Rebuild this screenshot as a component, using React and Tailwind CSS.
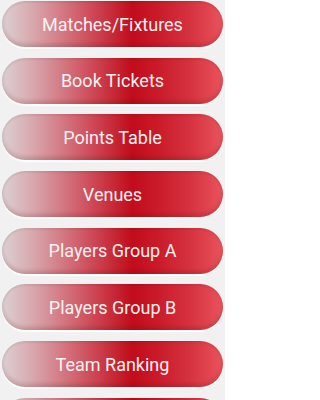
import React from 'react';

const items = [
  'Matches/Fixtures',
  'Book Tickets',
  'Points Table',
  'Venues',
  'Players Group A',
  'Players Group B',
  'Team Ranking',
  '',
];

export default function App() {
  return (
    <div className="w-[225px] h-[400px] overflow-hidden bg-[#f1f1f1]">
      <div className="flex flex-col gap-[10.7px] pt-px px-[2px]">
        {items.map((label, i) => (
          <button
            key={i}
            className="h-[46px] w-full shrink-0 rounded-full flex items-center justify-center text-[#fdf2f2] text-[18px] font-['Roboto',sans-serif] bg-[linear-gradient(90deg,#dcd0d2_0%,#d8aeb3_12%,#d47d87_26%,#cd4553_42%,#c10c1b_59%,#ca1a2a_70%,#d5323f_85%,#ea545c_100%)] shadow-[inset_0_-3px_4px_rgba(90,0,0,0.18),inset_0_2px_2px_rgba(0,0,0,0.06),0_2px_1px_rgba(255,255,255,0.9)]"
          >
            {label}
          </button>
        ))}
      </div>
    </div>
  );
}
